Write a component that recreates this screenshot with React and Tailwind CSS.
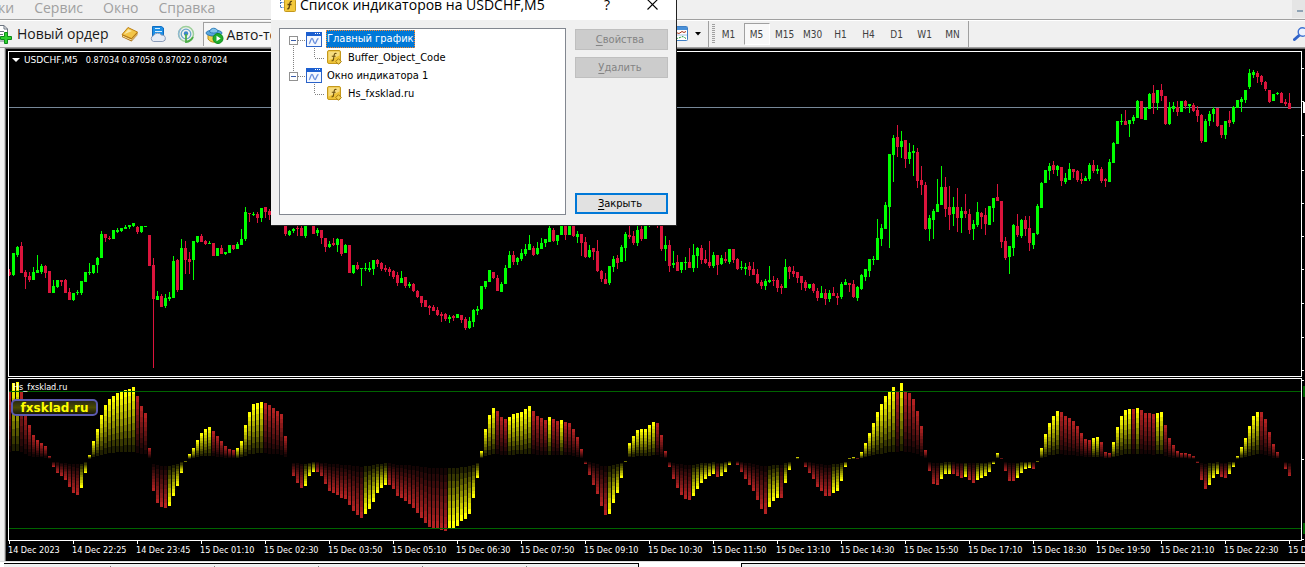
import React from "react";

// one bar every 4px, first bar centred on x = 9
const STEP = 4;
const FIRST_X = 9;

// colour (g = up, r = down), then high / body top / body bottom / low
const CANDLES = `
r269.272.275.276 g253.253.275.276 g246.247.255.257 r242.246.273.273 r270.272.277.289 r272.276.280.282 g267.272.280.280 g255.270.273.273
g264.266.272.274 r265.266.273.278 r271.271.293.293 g280.286.293.293 g280.280.287.288 r280.280.282.286 r279.280.293.293 r288.292.300.300
g293.293.300.301 g290.292.293.295 g281.281.293.295 g272.272.282.282 g263.272.273.275 g265.265.273.274 g257.258.265.273 g231.234.258.258
r234.234.238.242 r236.238.239.240 g230.230.239.239 g228.230.232.233 g228.228.231.232 g225.227.229.229 g225.225.227.229 g223.223.226.227
r226.227.232.234 g226.226.232.233 g226.226.227.227 r235.235.266.266 r258.265.299.368 g291.296.300.300 r294.296.307.307 g294.298.306.308
g292.297.299.301 g256.261.298.298 r259.260.290.292 g239.248.290.290 r241.248.260.274 r252.259.262.274 g241.241.260.280 g236.236.242.243
r234.236.242.242 r240.241.244.245 g241.243.244.244 r243.243.256.256 g248.248.256.256 r245.248.254.254 g252.252.254.255 g245.245.253.253
r245.245.249.250 g242.244.249.249 g229.239.245.245 g207.212.239.241 r213.213.214.222 g212.214.215.216 r212.214.218.223 g208.208.218.222
r207.207.212.218 r209.211.215.220 g208.210.216.220 r208.210.214.219 g206.209.215.220 r214.220.234.236 g230.231.235.236 g228.229.231.233
r220.228.229.236 r220.228.236.236 g216.218.236.238 r214.216.220.223 r216.218.234.234 g228.230.233.236 r230.230.238.244 r238.238.247.252
g241.244.247.248 r238.243.245.246 g238.239.245.252 r239.239.254.256 g244.245.253.253 r245.245.273.273 g265.265.273.274 r262.265.269.270
g268.268.269.286 g263.268.269.271 g262.268.270.272 g260.260.269.275 r259.260.264.267 r262.263.269.271 r265.268.270.272 r267.269.272.276
r270.271.277.279 r272.275.283.286 g271.278.283.283 r277.277.286.288 g282.284.286.288 r283.284.291.292 r290.291.297.298 r296.296.303.307
r300.300.307.307 r305.306.308.315 r305.307.311.311 r307.310.315.316 r312.314.316.322 r313.314.319.321 g315.317.319.323 r315.316.318.321
g314.314.318.318 r315.315.320.323 r317.319.328.330 g317.321.328.329 g309.310.322.327 g306.309.311.315 g286.286.309.310 g281.281.287.289
g270.270.282.282 r272.272.278.279 r275.278.291.291 g282.284.292.292 g265.268.284.284 g251.255.268.268 r251.255.262.265 g257.258.262.265
g249.253.259.261 g244.249.254.256 g235.244.250.250 r246.248.255.256 g242.248.254.255 g238.243.249.249 g239.239.243.247 g226.228.242.242
r228.230.241.242 g235.235.241.245 g220.222.235.235 r220.222.235.240 g220.222.235.235 r220.222.236.237 g231.234.237.243 r234.234.243.256
r237.242.257.258 g245.250.257.258 r248.248.252.260 r240.251.271.272 r270.271.279.282 r273.279.284.284 g266.266.283.285 g256.259.267.272
r255.258.263.269 g245.247.262.262 g232.234.248.261 r220.235.237.239 r231.236.243.245 g220.230.243.246 r222.229.239.241 g218.220.239.239
g216.218.224.227 g214.216.220.223 r214.216.222.228 r218.220.249.251 g236.245.249.261 r240.245.266.272 g251.263.265.268 r255.262.271.271
g262.262.270.273 g257.262.263.270 r248.262.268.268 g244.255.268.272 g247.248.256.268 r245.248.260.264 r250.259.263.264 r241.262.266.268
g252.255.266.268 r255.255.265.275 g255.258.264.265 r252.259.261.263 g249.249.262.264 r249.249.260.263 r258.259.269.270 g261.267.268.270
g263.267.269.275 r262.266.270.276 r262.269.275.275 r269.274.283.284 r280.282.286.289 g279.281.286.290 g266.280.282.283 r276.280.281.286
r278.280.288.292 r284.286.288.294 g259.267.288.288 r266.267.272.279 r266.271.274.277 r272.272.278.283 r276.276.283.290 r280.282.288.291
g284.284.288.289 r283.284.291.293 r288.291.298.301 g286.293.298.298 r289.293.299.305 g290.293.299.302 r287.293.296.296 r293.296.298.305
g282.284.297.299 g279.282.285.285 r283.283.285.292 r280.284.297.298 g286.287.298.301 g274.275.289.290 g269.269.277.281 g259.259.271.277
g256.259.260.265 g219.238.260.260 g224.228.239.246 g202.205.229.229 g154.154.207.248 g135.138.155.182 r125.137.147.157 g131.141.147.158
r140.140.159.168 g143.152.159.164 g145.151.153.176 r148.152.181.188 r166.180.185.195 r182.185.229.230 g215.218.229.241 g209.211.220.239
g179.204.212.212 g166.187.205.205 r177.187.209.217 r186.207.215.230 g197.207.214.226 r188.207.218.232 g207.211.218.233 r194.211.214.218
r209.214.230.234 g220.224.229.240 g202.212.225.227 r212.213.217.229 r208.215.224.235 g206.206.225.225 g198.198.208.222 r184.197.201.201
r201.201.242.248 r237.241.258.260 g246.246.257.274 g224.225.248.256 r214.226.235.237 g219.220.236.238 r216.220.229.236 r216.228.243.251
g233.233.245.249 g204.206.234.235 g182.183.208.208 g170.170.183.183 g163.166.171.180 r161.165.170.174 g165.166.170.176 r167.167.181.186
g173.178.182.184 g163.169.180.180 r169.169.172.178 r170.171.180.182 r173.179.181.184 g176.178.181.181 g163.165.179.181 r160.165.171.173
g165.169.171.174 r167.169.181.183 r178.179.181.187 g159.162.182.182 g142.143.163.163 g121.121.144.144 g114.121.122.125 r110.121.125.125
g120.120.124.137 g115.117.121.124 g100.101.118.118 r101.101.119.119 g107.108.120.120 g93.94.109.109 r85.93.103.114 g90.90.103.110
r84.90.96.101 r96.96.124.125 g102.107.124.125 g102.106.109.112 r101.107.112.116 g101.101.112.112 r100.101.106.109 g104.104.106.113
r103.105.111.112 r106.110.116.122 r114.115.141.143 g119.121.142.142 g111.114.121.126 g107.109.114.122 r108.108.126.127 r125.125.135.138
g121.121.135.139 r111.120.123.127 g106.107.122.124 g100.100.108.108 g97.99.102.112 g90.90.100.103 g69.73.87.89 g70.72.75.78
r71.73.77.83 r75.76.82.85 r81.82.89.91 r90.90.102.103 g94.94.101.101 g92.93.94.95 r92.93.103.103 r99.102.104.106 r93.103.109.109
`.trim().split(/\s+/).map((s) => ({ up: s[0] === "g", v: s.slice(1).split(".").map(Number) }));

// colour (y / r) and the y where the bar ends, "-" is an empty slot
const BARS = `
r392 y383 y382 r392 r410 r425 r435 r440 r443 r446 r456 r467 r473 r476 r480 r487 r493 r495 y488 y473
y455 y441 y429 y415 y405 y399 y396 y393 y392 y390 y389 y387 r396 r406 r413 r448 r491 r503 r507 r508
y506 y496 y486 y473 y462 y454 y448 y440 y433 y429 y427 r431 r436 r441 r446 r449 r450 y448 y441 y425
y412 y404 y403 y402 r403 r405 r408 r411 r414 r436 - r476 r483 r488 y486 y476 y472 r472 r476 r484
r491 r493 r495 r498 r499 r505 r511 r515 r518 y514 y509 y502 y493 y488 y485 r485 r489 r496 r498 r501
r504 r508 r513 r518 r523 r527 r528 r528 r530 r531 y528 y528 y526 y521 y519 y514 y498 y478 y451 y429
y415 y408 r411 r417 r419 y417 y414 y413 y412 y409 y406 r411 r416 r418 r420 y417 r419 r421 y420 r422
r423 r429 r437 r449 r464 r475 r485 r494 r506 r515 y514 y503 y493 y478 y462 y443 y436 y430 y429 y429
y425 y422 r423 r435 r451 r467 r479 r488 r495 r499 r500 y496 y489 y483 y479 y476 y474 r477 y476 y472
y465 - r465 r472 r479 r485 r491 r500 r509 r514 y507 y501 y498 r498 y483 y470 - y457 - r467
r473 r479 r487 r491 r496 r496 y493 y491 y481 y467 y458 y457 r458 y452 y443 y433 y423 y412 y404 y396
y392 y387 r392 y383 r392 r393 r399 r411 r426 r450 r471 r484 r485 y479 y474 y474 r474 r476 r478 y477
r480 r483 y480 y478 y476 y472 y464 y453 r458 r471 r481 r481 y478 y473 y469 y468 r469 y462 y448 y434
y423 y416 y411 r412 r416 r418 r421 r426 r433 r439 r440 y438 y437 r442 r452 r453 y442 y427 y416 y410
y409 r409 y408 r410 r413 r413 r414 y413 y412 r425 r438 r445 r451 r453 r453 r454 r456 r463 r480 r489
y485 y478 y474 r477 r478 y474 y467 y456 y447 y438 y426 y416 y412 r412 r419 r432 r444 r452 - r469 r476
`.trim().split(/\s+/);

const LEVELS = 10;
const YELLOW = ["#1f1f00", "#383800", "#555500", "#717100", "#8d8d00", "#aaaa00", "#c6c600", "#e2e200", "#ffff00"];
const RED = ["#140404", "#270808", "#3b0b0b", "#4f0f0f", "#631313", "#761717", "#8a1a1a", "#9e1e1e", "#b22222"];

const DATES = [
  "14 Dec 2023", "14 Dec 22:25", "14 Dec 23:45", "15 Dec 01:10", "15 Dec 02:30", "15 Dec 03:50", "15 Dec 05:10",
  "15 Dec 06:30", "15 Dec 07:50", "15 Dec 09:10", "15 Dec 10:30", "15 Dec 11:50", "15 Dec 13:10", "15 Dec 14:30",
  "15 Dec 15:50", "15 Dec 17:10", "15 Dec 18:30", "15 Dec 19:50", "15 Dec 21:10", "15 Dec 22:30", "15 Dec 23:50",
];

const PERIODS = ["M1", "M5", "M15", "M30", "H1", "H4", "D1", "W1", "MN"];

const rect = (x, y, w, h) => `M${x} ${y}h${w}v${h}h${-w}z`;

function candlePath(up) {
  return CANDLES.map((c, i) => {
    if (c.up !== up) return "";
    const [h, t, b, l] = c.v;
    const x = FIRST_X + i * STEP;
    return rect(x, h, 1, l - h) + rect(x - 1, t, 3, b - t);
  }).join("");
}

// every bar is cut in ten slices going from black to full colour
function barPaths(kind) {
  const out = Array(LEVELS - 1).fill("");
  BARS.forEach((s, i) => {
    if (s[0] !== kind) return;
    const end = Number(s.slice(1));
    const zero = end < 460 ? 459 : 461;
    for (let k = 1; k < LEVELS; k++) {
      const a = Math.round(zero + ((end - zero) * k) / LEVELS);
      const b = Math.round(zero + ((end - zero) * (k + 1)) / LEVELS);
      if (a !== b) out[k - 1] += rect(FIRST_X - 1 + i * STEP, Math.min(a, b), 3, Math.abs(a - b));
    }
  });
  return out;
}

function PriceChart() {
  return (
    <svg className="block h-full w-full" shapeRendering="crispEdges" aria-hidden="true">
      <g transform="translate(-9 -52)">
        <rect x="9" y="107" width="4000" height="1" fill="#778899" />
        <path d={candlePath(true)} fill="#00ff00" />
        <path d={candlePath(false)} fill="#dc143c" />
      </g>
    </svg>
  );
}

function Histogram() {
  return (
    <svg className="block h-full w-full" shapeRendering="crispEdges" aria-hidden="true">
      <g transform="translate(-9 -379)">
        {barPaths("y").map((d, k) => <path key={k} d={d} fill={YELLOW[k]} />)}
        {barPaths("r").map((d, k) => <path key={k} d={d} fill={RED[k]} />)}
        <rect x="9" y="391" width="4000" height="1" fill="#006400" />
        <rect x="9" y="528" width="4000" height="1" fill="#006400" />
      </g>
    </svg>
  );
}

function NewOrderIcon() {
  return (
    <svg width="13" height="20" viewBox="0 0 13 20" className="shrink-0">
      <path d="M-4 1.5H4l3.500 3.500V17H-4z" fill="#fff" stroke="#6b7480" />
      <path d="M4 1.500V5h3.500M0 7.500h4M0 10.500h3" fill="none" stroke="#6b7480" />
      <path d="M4.500 8.500h3v4h4v3h-4v4h-3v-4h-4v-3h4z" fill="#2fd02f" stroke="#0c8a18" />
    </svg>
  );
}

function BookIcon() {
  return (
    <svg width="18" height="18" viewBox="0 0 18 18">
      <path d="M1 9.500 7 2.500l9.500 4.500v3L10.500 16.500 1 12z" fill="#a86a0c" />
      <path d="M1 9.500 7 2.500 16.500 7 10.500 13.500z" fill="#f2c548" stroke="#b77a12" strokeWidth=".8" />
      <path d="M3 9.300 7.300 4.300 11 6z" fill="#fbe9a6" />
      <path d="M1.500 11l9 4 6-6" fill="none" stroke="#f7e2a0" />
    </svg>
  );
}

function ServerIcon() {
  return (
    <svg width="18" height="18" viewBox="0 0 18 18">
      <path d="M3.500 1.500h9l2 1.500v9h-11z" fill="#1e90e6" stroke="#0f6cc0" />
      <path d="M6 3.500h5M6 6.500h7M6 8.500h5" stroke="#d8efff" />
      <path d="M4.500 16.500a3 3 0 0 1 0-5.800 4.500 4 0 0 1 8-.6 3.200 3.200 0 0 1 1.300 6.400z" fill="#e6ebf4" stroke="#8a9bb8" />
    </svg>
  );
}

function SignalIcon() {
  return (
    <svg width="18" height="18" viewBox="0 0 18 18" fill="none">
      <circle cx="9" cy="9" r="7.500" stroke="#9ccf9a" strokeWidth="1.500" />
      <circle cx="9" cy="9" r="4.800" stroke="#6aa7c8" strokeWidth="1.300" />
      <path d="M4 3.500a7.500 7.500 0 0 0 0 11" stroke="#8fb5d6" strokeWidth="1.300" />
      <circle cx="9" cy="8.500" r="2.200" fill="#3c86c8" />
      <path d="M9 9v8c4-.5 6-3 7-5" stroke="#4cae48" strokeWidth="1.800" />
    </svg>
  );
}

function AutoIcon() {
  return (
    <svg width="19" height="18" viewBox="0 0 19 18" className="shrink-0">
      <path d="M3 8c2 3 10 3 12 0v5c-2 4-9 4.500-12 0z" fill="#f0cf50" stroke="#b98f16" />
      <ellipse cx="9" cy="7" rx="8" ry="3" fill="#5aa6dc" stroke="#2f7db8" />
      <path d="M4.500 6C5 1 12.500 1 13 6c-2 1.500-6.500 1.500-8.500 0z" fill="#84c4ec" stroke="#2f7db8" />
      <circle cx="13" cy="12.500" r="5" fill="#1fae2c" stroke="#0f8a1c" />
      <path d="M11.500 9.800v5.400l4.200-2.700z" fill="#fff" />
    </svg>
  );
}

function TemplateIcon() {
  return (
    <svg width="18" height="16" viewBox="0 0 18 16">
      <rect x=".5" y=".5" width="16" height="14" rx="1" fill="#fff" stroke="#3f7fc4" />
      <path d="M1 1h15v3H1z" fill="#4a90d8" />
      <path d="M2 7.500l3-1 3 1 3-2 2 1 2-1" fill="none" stroke="#a83214" />
      <path d="M1 9h15" stroke="#9fc0e4" />
      <path d="M2 12.500l4 0 3-1 3-1 3 2" fill="none" stroke="#1f9a3c" strokeDasharray="2 1" />
    </svg>
  );
}

function SearchIcon() {
  return (
    <svg width="14" height="16" viewBox="0 0 14 16" className="shrink-0">
      <path d="M1.500 13.500 6 9.500" stroke="#2f62c8" strokeWidth="3" strokeLinecap="round" />
      <circle cx="9.500" cy="6" r="4.300" fill="#eef4ff" stroke="#3f70d0" strokeWidth="1.400" />
    </svg>
  );
}

function WindowIcon() {
  return (
    <svg width="16" height="15" viewBox="0 0 16 15" className="shrink-0">
      <rect x=".5" y=".5" width="15" height="14" fill="#f4f8ff" stroke="#2a62c8" />
      <path d="M0 0h16v4H0z" fill="#1c5fd0" />
      <path d="M9 1.500h1M11 1.500h1M13 1.500h1" stroke="#fff" />
      <path d="M3 11.500c1 .5 1.500-5 3-5s1.500 5 3 5 1.500-5 3.500-5" fill="none" stroke="#6a8fdc" strokeWidth="1.300" />
    </svg>
  );
}

function FunctionIcon() {
  return (
    <svg width="16" height="15" viewBox="0 0 16 15" className="shrink-0">
      <rect x=".5" y=".5" width="13" height="13" rx="1.500" fill="#eec338" stroke="#c4981c" />
      <path d="M1.500 1.500h11v4l-11 5z" fill="#f6dc80" />
      <path d="M9.500 3.500c-1.600-.6-2.200.4-2.500 2.500l-.6 3.500c-.3 1.200-.9 1.500-1.900 1.200M4.800 6.300h3.800" fill="none" stroke="#6b5010" strokeWidth="1.100" />
      <path d="M11.500 8.700l2.800 2.800-2.800 2.800-2.800-2.800z" fill="#f4d050" stroke="#a67c10" />
    </svg>
  );
}

function TreeRoot({ label, selected, last, children }) {
  return (
    <li>
      <div className="flex h-[18px] items-center">
        <svg width="26" height="18" className="shrink-0" shapeRendering="crispEdges" fill="none">
          <path d={last ? "M13.500 0v6" : "M13.500 14v4"} stroke="#808080" strokeDasharray="1 1" />
          <path d="M18 10.500h8" stroke="#808080" strokeDasharray="1 1" />
          <rect x="9.500" y="6.500" width="8" height="8" fill="#fff" stroke="#919191" />
          <path d="M11 10.500h5" stroke="#3a5ca8" />
        </svg>
        <WindowIcon />
        <span
          className={
            selected
              ? "ml-1 border border-dotted border-[#ff8728] bg-[#0078d7] leading-4 text-white"
              : "ml-1 px-px pt-px leading-[17px]"
          }
        >
          {label}
        </span>
      </div>
      <ul>
        <li className="flex h-[18px] items-center">
          <svg width="47" height="18" className="shrink-0" shapeRendering="crispEdges" fill="none">
            {!last && <path d="M13.500 0v18" stroke="#808080" strokeDasharray="1 1" />}
            <path d="M34.500 0v10M35 10.500h10" stroke="#808080" strokeDasharray="1 1" />
          </svg>
          <FunctionIcon />
          <span className="ml-1 px-px pt-px leading-[17px]">{children}</span>
        </li>
      </ul>
    </li>
  );
}

function IndicatorsDialog() {
  return (
    <div
      role="dialog"
      aria-labelledby="dlg-title"
      className="absolute -top-[11px] left-[271px] w-[406px] border-r border-b border-[#222] bg-[#f0f0f0]"
    >
      <div className="flex h-[31px] items-center bg-white pr-[14px] pl-2 text-black">
        <svg width="17" height="18" viewBox="0 0 17 18" className="shrink-0">
          <path d="M1.500 0v12M1.500 6.500h4M1.500 11.500h4" stroke="#4a7ac0" strokeDasharray="2 1" />
          <rect x="5.500" y="3.500" width="11" height="12" rx="1" fill="#f2c83c" stroke="#c4981c" />
          <path d="M13 5.500c-1.500-.6-2 .5-2.300 2.500l-.6 3.500c-.3 1.200-.9 1.500-1.900 1.200M8.500 8.500h4" fill="none" stroke="#5c430c" strokeWidth="1.300" />
        </svg>
        <h2 id="dlg-title" className="ml-1 flex-1 text-[14px] leading-5 whitespace-nowrap">
          Список индикаторов на USDCHF,M5
        </h2>
        <button className="w-8 text-[14px] leading-5" aria-label="Справка">?</button>
        <button className="ml-[19px] flex w-5 justify-center" aria-label="Закрыть окно">
          <svg width="11" height="11" viewBox="0 0 11 11">
            <path d="M.5.500l10 10M10.500.500l-10 10" stroke="#000" strokeWidth="1.100" />
          </svg>
        </button>
      </div>
      <div className="flex gap-[9px] px-2 pt-2 pb-[10px] font-['DejaVu_Sans_Condensed','Noto_Sans',sans-serif] text-[11px]">
        <ul className="h-[187px] flex-1 border border-[#828790] bg-white pt-px text-black">
          <TreeRoot label="Главный график" selected>Buffer_Object_Code</TreeRoot>
          <TreeRoot label="Окно индикатора 1" last>Hs_fxsklad.ru</TreeRoot>
        </ul>
        <div className="flex w-[93px] flex-col pt-px pb-px">
          <button disabled className="h-[21px] border border-[#bfbfbf] bg-[#ccc] pt-px pr-[3px] text-[#838383]">
            <u className="underline-offset-2">С</u>войства
          </button>
          <button disabled className="mt-[7px] h-[21px] border border-[#bfbfbf] bg-[#ccc] pt-px pr-[3px] text-[#838383]">
            <u className="underline-offset-2">У</u>далить
          </button>
          <button className="mt-auto h-[21px] border-2 border-[#0078d7] bg-[#e1e1e1] pt-px pr-[3px] leading-4 text-black">
            <u className="underline-offset-2">З</u>акрыть
          </button>
        </div>
      </div>
    </div>
  );
}

function Toolbar() {
  return (
    <div className="flex h-[27px] items-center border-t border-white text-[#1a1a1a]">
      <button className="flex items-center text-[14px] leading-5 whitespace-nowrap">
        <NewOrderIcon />
        <span className="ml-1">Новый ордер</span>
      </button>
      <div className="ml-3 flex gap-[10px]">
        <button aria-label="Маркет"><BookIcon /></button>
        <button aria-label="Сервер"><ServerIcon /></button>
        <button aria-label="Сигналы"><SignalIcon /></button>
      </div>
      <button className="ml-2 flex h-6 w-[128px] shrink-0 items-center border-t border-l border-[#a0a0a0] bg-[#f7f7f7] pl-px text-[14px] leading-5 whitespace-nowrap">
        <AutoIcon />
        <span className="ml-[3px]">Авто-торговля</span>
      </button>
      <div className="flex h-full min-w-0 flex-1 items-center">
        <div className="flex h-full w-[378px] shrink-0 items-center justify-end border-r border-[#a0a0a0] pr-[6px]">
          <button className="flex items-center" aria-label="Шаблоны">
            <TemplateIcon />
            <svg width="7" height="4" className="ml-[6px]"><path d="M0 0h6L3 3.500z" fill="#000" /></svg>
          </button>
        </div>
        <div className="ml-[3px] flex h-5 w-[3px] flex-col gap-px">
          {Array.from({ length: 10 }, (_, i) => <i key={i} className="h-px w-full bg-[#a0a0a0]" />)}
        </div>
        <div className="flex h-full items-center border-r border-[#a0a0a0] pr-px font-['DejaVu_Sans_Condensed',sans-serif] text-[10px] text-[#404040]">
          {PERIODS.map((p) => (
            <button
              key={p}
              className={
                p === "M5"
                  ? "mx-px h-[22px] w-[26px] border border-t-[#a0a0a0] border-r-white border-b-white border-l-[#a0a0a0] bg-[#f8f8f8]"
                  : "h-[22px] w-7"
              }
            >
              {p}
            </button>
          ))}
        </div>
        <button className="-mr-0.5 ml-auto" aria-label="Поиск"><SearchIcon /></button>
      </div>
    </div>
  );
}

function Axis({ marks }) {
  return (
    <svg className="h-full w-[3px] shrink-0" shapeRendering="crispEdges" aria-hidden="true">
      {marks.map((y) => <rect key={y} x="0" y={y} width="2" height="1" fill="#fff" />)}
    </svg>
  );
}

export default function App() {
  return (
    <div className="relative overflow-hidden bg-[#f0f0f0] font-['Open_Sans','Noto_Sans',sans-serif]">
      {/* menu */}
      <div className="flex h-5 items-start justify-between border-b border-[#a0a0a0]">
        <nav className="flex gap-5 text-[14px] leading-4 text-[#a0a0a0]">
          <a href="#charts" className="-ml-[2px]">ки</a>
          <a href="#service">Сервис</a>
          <a href="#window">Окно</a>
          <a href="#help">Справка</a>
        </nav>
        <button className="flex h-[18px] w-[13px] items-center bg-[#e5e5e5] pt-1 pl-[5px]" aria-label="Свернуть">
          <span className="h-0.5 w-1.5 bg-[#8fa3b5]" />
        </button>
      </div>

      <Toolbar />

      {/* chart window */}
      <div className="flex border-t border-[#a0a0a0]">
        <div className="w-1 shrink-0" />
        <div className="min-w-0 flex-1 border-l border-[#ccc]">
          <div className="border-t border-l border-[#6e6e6e] bg-black pt-0.5 pl-0.5 font-['DejaVu_Sans_Condensed','Noto_Sans',sans-serif] text-[9px] text-white">
            <div className="flex h-[326px]">
              <div className="relative min-w-0 flex-1 border border-white">
                <PriceChart />
                <div className="absolute top-0.5 left-[3px] flex items-center leading-3 whitespace-pre">
                  <svg width="8" height="4" className="mr-1"><path d="M0 0h8L4 4z" fill="#fff" /></svg>
                  <span className="mr-2 font-['DejaVu_Sans',sans-serif]">USDCHF,M5</span>
                  <span>0.87034 0.87058 0.87022 0.87024</span>
                </div>
              </div>
              <div className="relative">
                <Axis marks={[17, 50, 84, 119, 152, 185, 218, 252, 286, 319]} />
                <span className="absolute top-[51px] right-0 h-[11px] w-0.5 bg-white" />
              </div>
            </div>
            <div className="mt-px flex h-[163px]">
              <div className="relative min-w-0 flex-1 border border-white">
                <Histogram />
                <span className="absolute top-0.5 left-1 leading-3">Hs_fxsklad.ru</span>
                <span className="absolute top-5 left-0.5 flex h-[17px] w-[87px] items-center justify-center rounded-[5px] border-2 border-[#5a5aae] bg-linear-to-b from-[#2a2a10] via-[#4a4a00] to-[#1c1c08] font-['DejaVu_Sans',sans-serif] text-[12px] leading-3 font-bold text-[#ffff00]">
                  fxsklad.ru
                </span>
              </div>
              <div className="relative">
                <Axis marks={[2, 81, 161]} />
                <span className="absolute top-2 right-0 h-[11px] w-0.5 bg-[#006400]" />
                <span className="absolute top-[145px] right-0 h-[11px] w-0.5 bg-[#006400]" />
              </div>
            </div>
            <div className="flex h-5 overflow-hidden">
              {DATES.map((d) => (
                <div key={d} className="w-16 shrink-0 whitespace-nowrap">
                  <i className="ml-px block h-[3px] w-px bg-white" />
                  <span className="block leading-3">{d}</span>
                </div>
              ))}
            </div>
          </div>
        </div>
      </div>

      {/* tops of the windows below */}
      <div className="flex h-1.5 border-t border-[#dcdcdc] bg-white pt-px pl-1">
        <div className="flex w-[635px] border-t border-r border-black bg-[#f0f0f0] pt-0.5">
          <span className="w-[107px] border-r border-[#808080]" />
          {[1, 2, 3, 4].map((n) => <span key={n} className="w-[104px] border-r border-[#808080]" />)}
        </div>
        <div className="ml-[102px] flex-1 border-t border-l border-black bg-[#f0f0f0]" />
      </div>

      <IndicatorsDialog />
    </div>
  );
}
